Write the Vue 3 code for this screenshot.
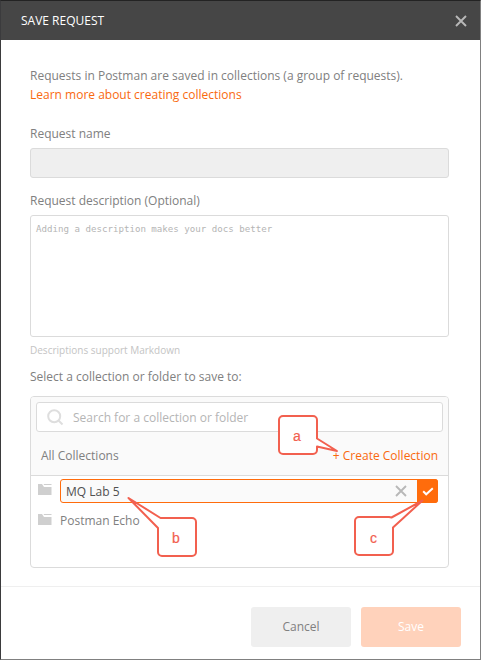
<script setup>
import { ref } from 'vue'

const requestName = ref('')
const description = ref('')
const search = ref('')
const newCollection = ref('MQ Lab 5')

const callouts = [
  { label: 'a', x: 297, y: 441, path: 'M317 438.5V420a4 4 0 0 0-4-4h-30a4 4 0 0 0-4 4v30a4 4 0 0 0 4 4h30a4 4 0 0 0 4-4v-3.5L337 451Z' },
  { label: 'b', x: 176, y: 543, path: 'M160.5 518H192a4 4 0 0 1 4 4v30a4 4 0 0 1-4 4h-30a4 4 0 0 1-4-4v-24L128.5 498Z' },
  { label: 'c', x: 373.5, y: 543, path: 'M391.5 517.5L389 517H359a4 4 0 0 0-4 4v30a4 4 0 0 0 4 4h30a4 4 0 0 0 4-4v-23.5L422.5 500.5Z' },
]
</script>

<template>
  <div class="modal">
    <header class="header">
      <span class="title">SAVE REQUEST</span>
      <svg class="close" width="12" height="12" viewBox="0 0 12 12"><path d="M1 1L11 11M11 1L1 11" /></svg>
    </header>

    <main class="body">
      <p class="intro">Requests in Postman are saved in collections (a group of requests).</p>
      <a class="learn">Learn more about creating collections</a>

      <label class="label name-label">Request name</label>
      <input v-model="requestName" class="name-input" />

      <label class="label desc-label">Request description (Optional)</label>
      <textarea v-model="description" class="desc-input" placeholder="Adding a description makes your docs better"></textarea>
      <div class="hint">Descriptions support Markdown</div>

      <div class="label select-label">Select a collection or folder to save to:</div>
      <section class="panel">
        <div class="panel-top">
          <div class="search">
            <svg width="17" height="17" viewBox="0 0 17 17"><circle cx="7.2" cy="7.2" r="6" /><path d="M11.5 11.5L15.5 15.5" /></svg>
            <input v-model="search" placeholder="Search for a collection or folder" />
          </div>
          <div class="panel-head">
            <span>All Collections</span>
            <a class="create">+ Create Collection</a>
          </div>
        </div>
        <div class="row">
          <svg class="folder" width="14" height="11" viewBox="0 0 14 11"><path d="M0 0H4L6 3H13.5V11H0ZM5.5 0H13.5V1H6.2Z" /></svg>
          <div class="edit">
            <input v-model="newCollection" />
            <svg class="clear" width="12" height="12" viewBox="0 0 12 12"><path d="M1 1L11 11M11 1L1 11" /></svg>
            <button class="confirm">
              <svg width="12" height="9" viewBox="0 0 12 9"><path d="M1.2 4.3L4.2 7.3L10.8 1.2" /></svg>
            </button>
          </div>
        </div>
        <div class="row second">
          <svg class="folder" width="14" height="11" viewBox="0 0 14 11"><path d="M0 0H4L6 3H13.5V11H0ZM5.5 0H13.5V1H6.2Z" /></svg>
          <span>Postman Echo</span>
        </div>
      </section>
    </main>

    <footer class="footer">
      <button class="btn cancel">Cancel</button>
      <button class="btn save">Save</button>
    </footer>

    <svg class="callouts" width="481" height="660" viewBox="0 0 481 660">
      <g v-for="c in callouts" :key="c.label">
        <path :d="c.path" />
        <text :x="c.x" :y="c.y">{{ c.label }}</text>
      </g>
    </svg>
  </div>
</template>

<style>
body {
  margin: 0;
}
</style>

<style scoped>
* {
  box-sizing: border-box;
}
.modal {
  position: relative;
  display: flex;
  flex-direction: column;
  width: 481px;
  height: 660px;
  overflow: hidden;
  background: #fff;
  border: 1px solid #808080;
  border-top-color: #232323;
  border-left-color: #3b3b3d;
  color: #808080;
  font: 12px/18px "Open Sans", sans-serif;
}
input,
textarea,
button {
  font: inherit;
  color: inherit;
  outline: 0;
  margin: 0;
}
.header {
  display: flex;
  align-items: center;
  justify-content: space-between;
  height: 39px;
  padding: 0 13px 0 20px;
  background: #464646;
  color: #fff;
}
.close,
.clear {
  fill: none;
  stroke: #b8b8b8;
  stroke-width: 1.9;
}
.body {
  display: flex;
  flex-direction: column;
  align-items: flex-start;
  height: 546px;
  padding: 27px 31px 0 29px;
}
.intro {
  margin: 0;
  height: 19px;
  white-space: nowrap;
}
.learn {
  height: 18px;
  color: #f9690e;
}
.label {
  height: 18px;
}
.name-label {
  margin-top: 21px;
}
.name-input {
  width: 419px;
  height: 30px;
  margin-top: 5px;
  border: 1px solid #dbdbdb;
  border-radius: 3px;
  background: #efefef;
}
.desc-label {
  margin-top: 14px;
}
.desc-input {
  display: block;
  width: 419px;
  height: 122px;
  margin-top: 5px;
  padding: 6px 5px;
  border: 1px solid #dbdbdb;
  border-radius: 3px;
  resize: none;
  font: 9.13px/14px "DejaVu Sans Mono", monospace;
}
::placeholder {
  color: #b5b5b5;
  opacity: 1;
}
.hint {
  height: 14px;
  margin-top: 6px;
  font-size: 10px;
  line-height: 14px;
  color: #c4c4c4;
}
.select-label {
  margin-top: 11px;
}
.panel {
  width: 419px;
  height: 172px;
  margin-top: 10px;
  border: 1px solid #dbdbdb;
  border-radius: 4px;
  overflow: hidden;
}
.panel-top {
  height: 79px;
  padding: 5px 5px 0;
  background: #fafafa;
  border-bottom: 1px solid #dbdbdb;
}
.search {
  display: flex;
  align-items: center;
  height: 30px;
  padding-left: 10px;
  gap: 9px;
  background: #fff;
  border: 1px solid #dbdbdb;
  border-radius: 3px;
}
.search svg {
  fill: none;
  stroke: #dedede;
  stroke-width: 2;
}
.search input {
  flex: 1;
  padding: 2px 0 0;
  border: 0;
}
.panel-head {
  display: flex;
  justify-content: space-between;
  padding: 15px 5px 0;
}
.create {
  color: #f9690e;
}
.row {
  display: flex;
  align-items: center;
  height: 30px;
  padding: 0 10px 0 7px;
}
.folder {
  margin: 0 8px 3px 0;
  fill: #cfcfcf;
}
.second {
  height: 29px;
}
.edit {
  display: flex;
  align-items: center;
  width: 378px;
  height: 24px;
  border: 1px solid #ff6c0c;
  border-radius: 3px;
  background: #fafafa;
}
.edit input {
  flex: 1;
  min-width: 0;
  padding: 2px 0 0 5px;
  border: 0;
  background: none;
  color: #505050;
}
.confirm {
  display: flex;
  align-items: center;
  justify-content: center;
  width: 21px;
  height: 24px;
  margin-left: 10px;
  margin-right: -1px;
  padding: 0;
  border: 0;
  border-radius: 0 3px 3px 0;
  background: #ff6c0c;
}
.confirm svg {
  fill: none;
  stroke: #fff;
  stroke-width: 2;
}
.footer {
  display: flex;
  justify-content: flex-end;
  gap: 10px;
  height: 73px;
  padding: 20px 19px 0 0;
  border-top: 1px solid #efefef;
}
.btn {
  width: 100px;
  height: 40px;
  padding: 0;
  border: 0;
  border-radius: 3px;
}
.cancel {
  background: #efefef;
}
.save {
  background: #ffd2bb;
  color: #fff;
}
.callouts {
  position: absolute;
  left: -1px;
  top: -1px;
  pointer-events: none;
}
.callouts path {
  fill: #fff;
  stroke: #f2604f;
  stroke-width: 2;
  stroke-linejoin: round;
}
.callouts text {
  fill: #f2604f;
  font: 14px "Liberation Sans", sans-serif;
  stroke: #f2604f;
  stroke-width: 0.2;
  text-anchor: middle;
}
</style>
